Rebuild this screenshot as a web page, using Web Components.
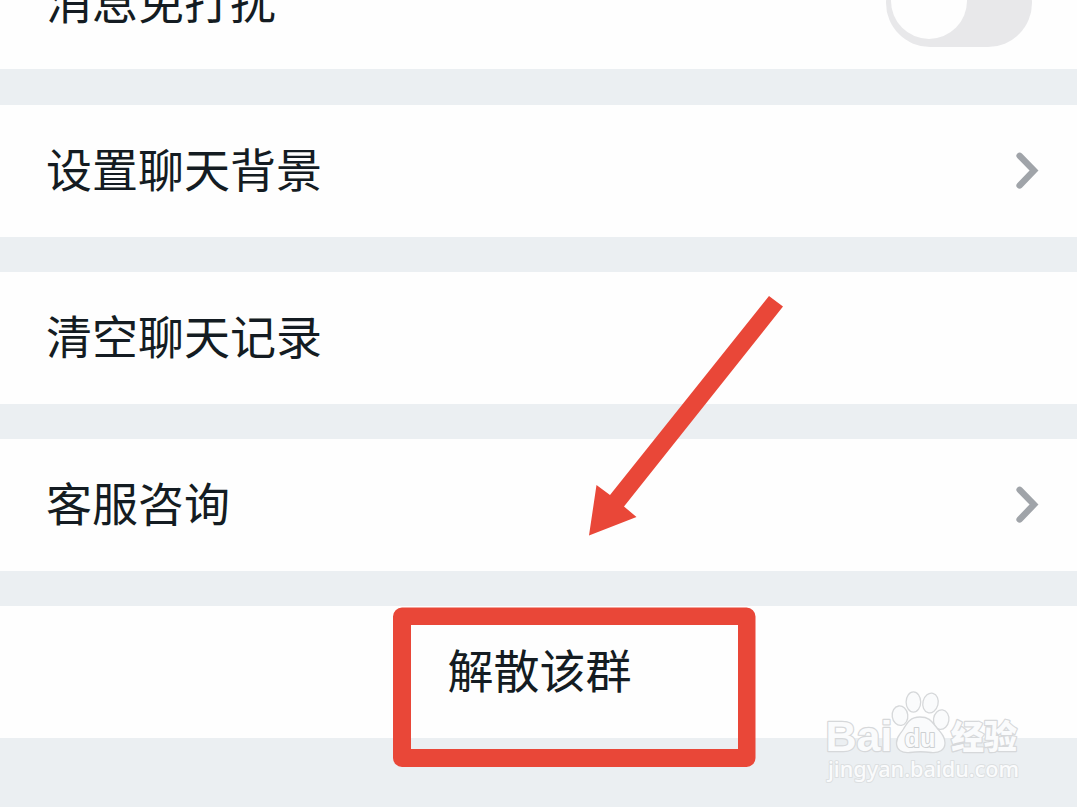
<!DOCTYPE html>
<html lang="zh-CN">
<head>
<meta charset="utf-8">
<title>群设置</title>
<style>
  body {
    margin: 0;
    background: #ebeff2;
    font-family: "Noto Sans CJK SC", sans-serif;
    color: #141c22;
    overflow: hidden;
  }
</style>
</head>
<body>
<settings-page>
  <setting-row class="first">消息免打扰<toggle-switch slot="end"></toggle-switch></setting-row>
  <setting-row>设置聊天背景<chevron-icon slot="end"></chevron-icon></setting-row>
  <setting-row>清空聊天记录</setting-row>
  <setting-row>客服咨询<chevron-icon slot="end"></chevron-icon></setting-row>
  <setting-row centered>解散该群</setting-row>
  <mark-overlay slot="overlay"></mark-overlay>
  <baidu-watermark slot="overlay"></baidu-watermark>
</settings-page>

<script>
class BaseElement extends HTMLElement {
  constructor() {
    super();
    const shadow = this.attachShadow({ mode: "open" });
    const template = document.createElement("template");
    template.innerHTML = this.constructor.template;
    shadow.appendChild(template.content.cloneNode(true));
  }
}

class SettingsPage extends BaseElement {
  static template = `
    <style>
      :host {
        display: block;
        position: relative;
        width: 1077px;
        height: 807px;
        overflow: hidden;
      }
      .list {
        display: flex;
        flex-direction: column;
        gap: 35px;
        margin-top: -63px;
      }
      ::slotted(.first) {
        margin-bottom: 1px;
      }
    </style>
    <div class="list"><slot></slot></div>
    <slot name="overlay"></slot>
  `;
}

class SettingRow extends BaseElement {
  static template = `
    <style>
      :host {
        display: flex;
        align-items: center;
        justify-content: space-between;
        box-sizing: border-box;
        height: 132px;
        padding: 0 38px 0 46px;
        background: #fefefe;
        font-size: 46px;
        line-height: 80px;
        white-space: nowrap;
      }
      .label {
        display: block;
        padding-bottom: 9px;
      }
      :host([centered]) {
        justify-content: center;
        padding: 0 0 0 2px;
      }
      :host([centered]) slot[name="end"] {
        display: none;
      }
    </style>
    <span class="label"><slot></slot></span>
    <slot name="end"></slot>
  `;
}

class ToggleSwitch extends BaseElement {
  static template = `
    <style>
      :host {
        display: flex;
        align-items: center;
        box-sizing: border-box;
        width: 146px;
        height: 88px;
        margin-right: 7px;
        padding: 0 5px 4px;
        border-radius: 44px;
        background: #e8e8ea;
      }
      .knob {
        width: 76px;
        height: 76px;
        border-radius: 50%;
        background: #fefefe;
      }
    </style>
    <div class="knob"></div>
  `;
}

class ChevronIcon extends BaseElement {
  static template = `
    <style>
      :host { display: block; width: 23px; height: 38px; }
      svg { display: block; }
    </style>
    <svg width="23" height="38" viewBox="0 0 23 38">
      <path d="M3.6 3.8L18 18.6L3.6 33.4" fill="none" stroke="#a0a4a9"
        stroke-width="6.4" stroke-linecap="round" stroke-linejoin="miter"/>
    </svg>
  `;
}

// red frame and arrow drawn over the list
class MarkOverlay extends BaseElement {
  static template = `
    <style>
      :host { position: absolute; inset: 0; }
      svg { display: block; }
    </style>
    <svg width="1077" height="807" viewBox="0 0 1077 807" fill="#e94738">
      <path d="M769 296L783 306.5L624 506.5L636.5 517L589 535.5L596.5 485L610 495Z"/>
      <path fill-rule="evenodd" d="M402 607.5H746.5a9 9 0 0 1 9 9V758a9 9 0 0 1-9 9H402a9 9 0 0 1-9-9V616.5a9 9 0 0 1 9-9ZM411 625V749H738V625Z"/>
    </svg>
  `;
}

class BaiduWatermark extends BaseElement {
  static template = `
    <style>
      :host { position: absolute; left: 820px; top: 685px; }
      svg { display: block; }
      text { paint-order: stroke; stroke-linejoin: round; }
      .latin { font-family: "Liberation Sans", Arial, sans-serif; font-weight: 700; }
      .cjk { font-family: "Noto Sans CJK SC", sans-serif; font-weight: 900; }
      .url { font-family: "Noto Sans", "Open Sans", sans-serif; font-weight: 500; }
    </style>
    <svg width="210" height="105" viewBox="0 0 210 105" fill="#fafbfc" stroke="#d6d8da" stroke-width="2.4">
      <text class="latin" x="5.5" y="65.5" font-size="43" textLength="67" lengthAdjust="spacingAndGlyphs">Bai</text>
      <g stroke-width="1.3">
        <ellipse cx="80" cy="30.7" rx="7.8" ry="9.8" transform="rotate(-8 80 30.7)"/>
        <ellipse cx="93.4" cy="17" rx="7.3" ry="10.2"/>
        <ellipse cx="110.5" cy="18" rx="7.6" ry="10" transform="rotate(14 110.5 18)"/>
        <ellipse cx="121.2" cy="34.6" rx="7.7" ry="9.8" transform="rotate(8 121.2 34.6)"/>
        <path d="M100 32C90 32 87 38 83.500 44C80 50 76.500 51 76.500 58C76.500 65 82 68.500 90 67.500C97 66.500 104 66.500 111 67.500C119 68.500 125 65 125 58C125 51 121 48 117 43C112 37 110 32 100 32Z"/>
      </g>
      <text class="latin" x="84.500" y="62" font-size="25" textLength="31" lengthAdjust="spacingAndGlyphs" stroke="#cdd0d2" stroke-width="2">du</text>
      <text class="cjk" x="131" y="63.500" font-size="33" textLength="66">经验</text>
      <text class="url" x="8" y="92" font-size="22" textLength="191" lengthAdjust="spacingAndGlyphs" stroke="#dcdfe1" stroke-width="2">jingyan.baidu.com</text>
    </svg>
  `;
}

customElements.define("settings-page", SettingsPage);
customElements.define("setting-row", SettingRow);
customElements.define("toggle-switch", ToggleSwitch);
customElements.define("chevron-icon", ChevronIcon);
customElements.define("mark-overlay", MarkOverlay);
customElements.define("baidu-watermark", BaiduWatermark);
</script>
</body>
</html>
